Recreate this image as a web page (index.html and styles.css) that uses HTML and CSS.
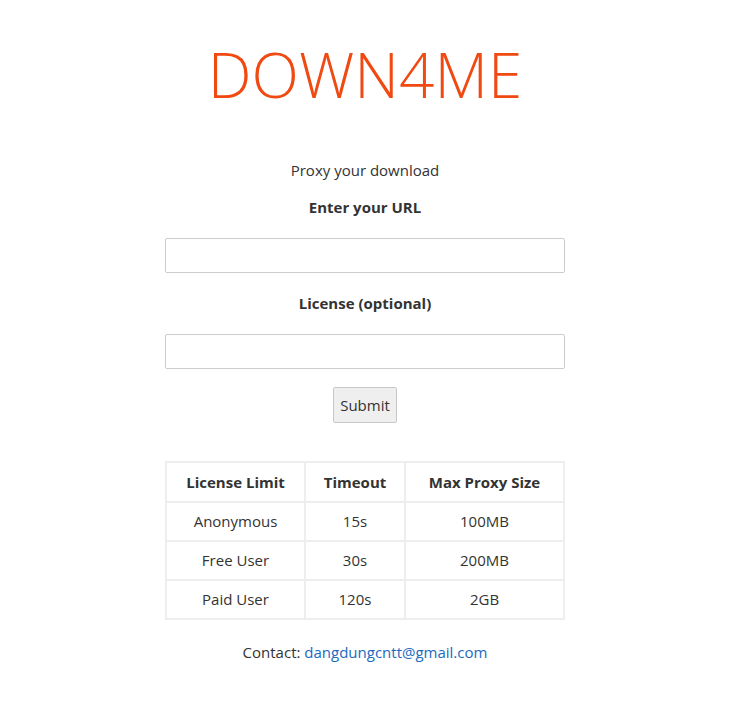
FILE: index.html
```html
<!DOCTYPE html>
<html>
<head>
<meta charset="utf-8">
<link rel="stylesheet" href="styles.css">
</head>
<body>
<div class="page">
  <h1 class="logo">DOWN4ME</h1>
  <p class="tagline">Proxy your download</p>
  <form class="form">
    <label class="label">Enter your URL</label>
    <input class="field" type="text">
    <label class="label label-second">License (optional)</label>
    <input class="field" type="text">
    <button class="submit" type="button">Submit</button>
  </form>
  <table class="limits">
    <thead>
      <tr><th class="c1">License Limit</th><th class="c2">Timeout</th><th class="c3">Max Proxy Size</th></tr>
    </thead>
    <tbody>
      <tr><td>Anonymous</td><td>15s</td><td>100MB</td></tr>
      <tr><td>Free User</td><td>30s</td><td>200MB</td></tr>
      <tr><td>Paid User</td><td>120s</td><td>2GB</td></tr>
    </tbody>
  </table>
  <p class="contact">Contact: <a class="mail" href="#">dangdungcntt@gmail.com</a></p>
</div>
</body>
</html>
```
FILE: styles.css
```css
html, body {
  margin: 0;
  padding: 0;
  background: #fff;
}
body {
  font-family: "Open Sans", "Noto Sans", "Liberation Sans", sans-serif;
  font-size: 15px;
  line-height: 1.42857;
  color: #333;
}
.page {
  width: 400px;
  margin: 0 0 0 calc(50% - 202px);
  text-align: center;
  display: flex;
  flex-direction: column;
  align-items: stretch;
}
.logo {
  margin: 43px 0 0;
  font-size: 62px;
  font-weight: 300;
  line-height: 1;
  color: #f04a12;
  letter-spacing: 0;
}
.tagline {
  margin: 55px 0 0;
}
.form {
  display: flex;
  flex-direction: column;
  align-items: center;
}
.label {
  display: block;
  font-weight: 700;
  margin-top: 16px;
  margin-bottom: 19px;
}
.label-second {
  margin-top: 20px;
  margin-bottom: 20px;
}
.field {
  box-sizing: border-box;
  width: 400px;
  height: 35px;
  border: 1px solid #ccc;
  border-radius: 2px;
  margin: 0;
  padding: 6px 12px;
  font: inherit;
}
.submit {
  margin-top: 18px;
  box-sizing: border-box;
  height: 36px;
  padding: 0 6px;
  font: inherit;
  color: #333;
  background: #efefef;
  border: 1px solid #c7c7c7;
  border-radius: 2px;
}
.limits {
  margin-top: 38px;
  width: 400px;
  border-collapse: collapse;
  border: 2px solid #eee;
}
.limits th, .limits td {
  border: 2px solid #eee;
  height: 37px;
  padding: 0 8px;
  text-align: center;
}
.limits th {
  height: 38px;
  font-weight: 700;
}
.c1 { width: 121px; }
.c2 { width: 82px; }
.contact {
  margin: 22px 0 0;
}
.mail {
  color: #1b6ac0;
  text-decoration: none;
}
```
